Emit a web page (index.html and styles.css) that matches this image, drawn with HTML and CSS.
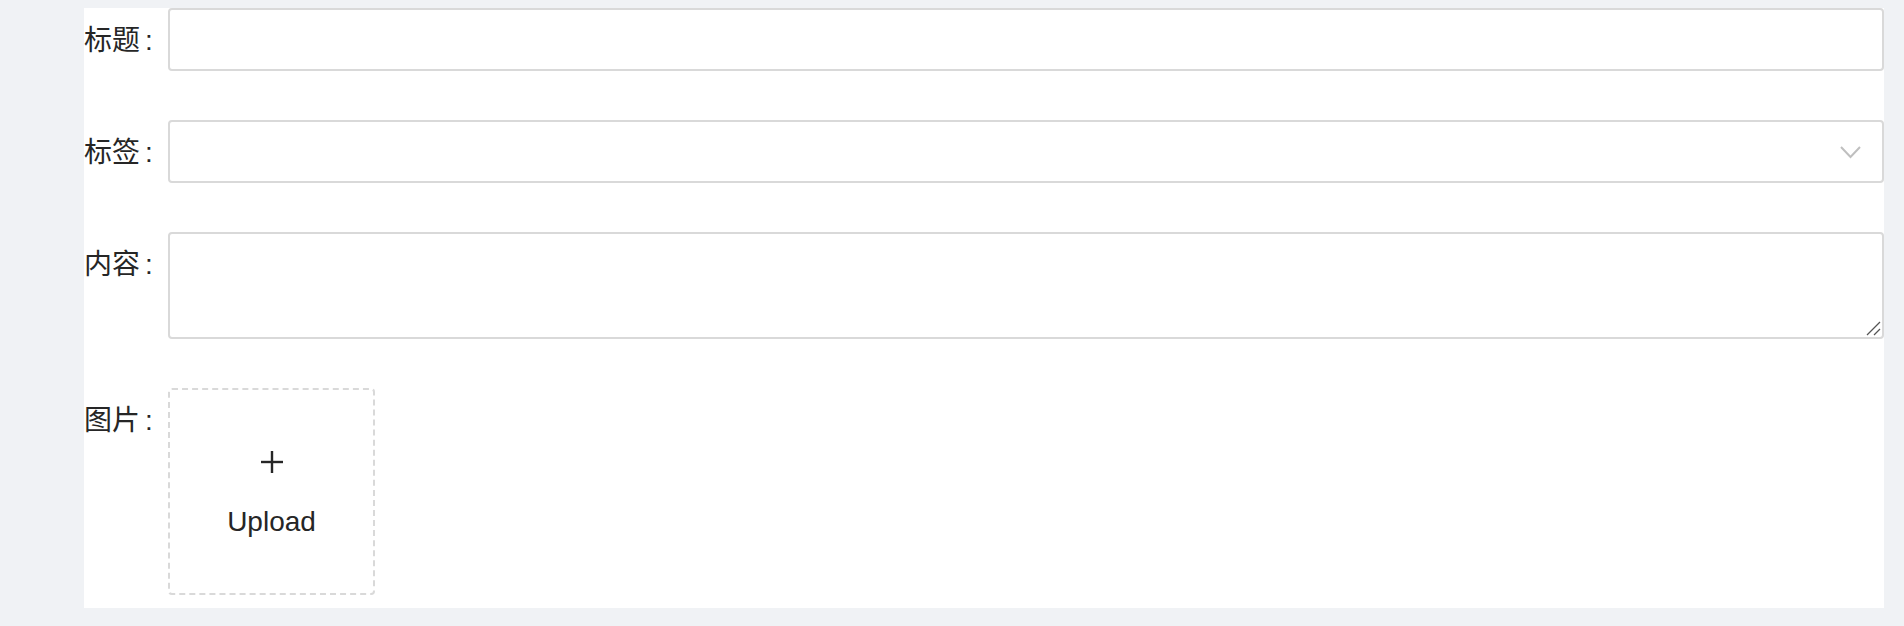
FILE: index.html
```html
<!DOCTYPE html>
<html lang="zh-CN">
<head>
<meta charset="utf-8">
<title>表单</title>
<link rel="stylesheet" href="styles.css">
</head>
<body>
<div class="page">
  <form class="panel">
    <div class="row">
      <label class="label">标题</label>
      <div class="control"><input class="input" type="text"></div>
    </div>
    <div class="row">
      <label class="label">标签</label>
      <div class="control">
        <div class="select">
          <svg class="chevron" width="21" height="14" viewBox="0 0 21 14"><polyline points="1,2 10.5,12 20,2" fill="none" stroke="#bfbfbf" stroke-width="2"/></svg>
        </div>
      </div>
    </div>
    <div class="row">
      <label class="label">内容</label>
      <div class="control textarea-wrap">
        <textarea class="textarea"></textarea>
        <svg class="resize" width="15" height="15" viewBox="0 0 15 15"><line x1="1" y1="14" x2="14" y2="1" stroke="#555" stroke-width="1.3"/><line x1="8" y1="14" x2="14" y2="8" stroke="#555" stroke-width="1.3"/></svg>
      </div>
    </div>
    <div class="row last">
      <label class="label">图片</label>
      <div class="control">
        <div class="upload">
          <svg class="plus" width="22" height="22" viewBox="0 0 22 22"><line x1="11" y1="0" x2="11" y2="22" stroke="#262626" stroke-width="2.4"/><line x1="0" y1="11" x2="22" y2="11" stroke="#262626" stroke-width="2.4"/></svg>
          <span class="upload-text">Upload</span>
        </div>
      </div>
    </div>
  </form>
</div>
</body>
</html>
```

FILE: styles.css
```css
html, body {
  margin: 0;
  padding: 0;
  background: #f0f2f5;
}
body {
  font-family: "Liberation Sans", "Noto Sans CJK SC", sans-serif;
  color: #262626;
}
.page {
  padding: 8px 20px 18px 84px;
}
.panel {
  background: #ffffff;
  padding: 0 0 13px 0;
  display: flex;
  flex-direction: column;
  gap: 49px;
}
.row {
  display: flex;
  align-items: flex-start;
}
.label {
  width: 84px;
  height: 63px;
  flex: none;
  text-align: right;
  font-size: 28px;
  line-height: 60px;
  padding-top: 3px;
  white-space: nowrap;
  box-sizing: border-box;
  color: #262626;
}
.label::after {
  content: ":";
  margin: 0 16px 0 5px;
}
.control {
  flex: 1;
  min-width: 0;
}
.textarea-wrap {
  position: relative;
}
.input, .select, .textarea {
  display: block;
  width: 100%;
  box-sizing: border-box;
  border: 2px solid #d9d9d9;
  border-radius: 4px;
  background: #fff;
  margin: 0;
  font-family: inherit;
  font-size: 28px;
  outline: none;
}
.input {
  height: 63px;
  padding: 0 16px;
}
.select {
  height: 63px;
  display: flex;
  align-items: center;
  justify-content: flex-end;
  padding: 0 21px 0 16px;
}
.chevron {
  display: block;
}
.textarea {
  height: 107px;
  padding: 8px 16px;
  resize: none;
}
.resize {
  position: absolute;
  right: 3px;
  bottom: 3px;
  display: block;
}
.upload {
  width: 207px;
  height: 207px;
  box-sizing: border-box;
  border: 2px dashed #d9d9d9;
  border-radius: 4px;
  background: #fff;
  display: flex;
  flex-direction: column;
  align-items: center;
  justify-content: center;
}
.plus {
  display: block;
  margin-left: 1px;
}
.upload-text {
  margin-top: 39px;
  font-size: 28px;
  line-height: 20px;
  color: #262626;
}
```
